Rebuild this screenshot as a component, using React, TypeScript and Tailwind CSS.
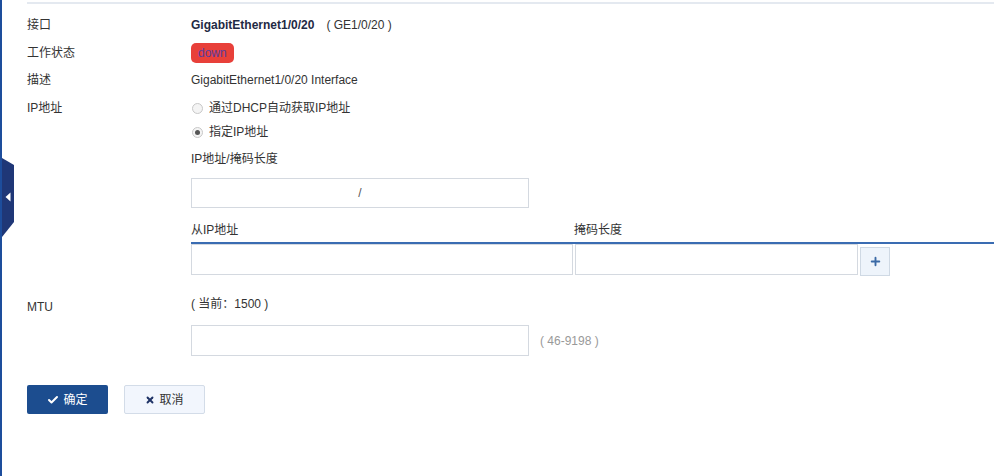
import { Check, Plus, X } from "lucide-react";

function Label({ children }: { children: React.ReactNode }) {
   return <div className="w-[164px] shrink-0 text-[12px] text-[#333]">{children}</div>;
}

function Radio({ checked, label }: { checked?: boolean; label: string }) {
   return (
      <div className="flex items-center h-[22px]">
         <span className="w-[11px] h-[11px] rounded-full border border-[#c8c8c8] bg-[#f4f4f4] flex items-center justify-center ml-[1px] mr-[6px]">
            {checked && <span className="w-[5px] h-[5px] rounded-full bg-[#555]" />}
         </span>
         <span>{label}</span>
      </div>
   );
}

function SidebarTab() {
   return (
      <div className="absolute left-0 top-[158px] w-[12px] h-[79px]">
         <svg width="12" height="79" viewBox="0 0 12 79">
            <polygon points="0,0 12,7 12,64 0,79" fill="#1f3777" />
            <polygon points="3.5,39 8.5,34.5 8.5,43.5" fill="#ffffff" />
         </svg>
      </div>
   );
}

export default function App() {
   return (
      <div
         className="relative w-[994px] h-[476px] bg-white border-l-2 border-[#1d4d9c] overflow-hidden text-[12px] text-[#333]"
         style={{ fontFamily: '"Liberation Sans", "Noto Sans CJK SC", sans-serif' }}
      >
         <SidebarTab />
         <div className="pl-[25px] pt-[2px]">
            <div className="h-[2px] bg-[#e4e9f0]" />

            <div className="flex items-center h-[22px] mt-[10px]">
               <Label>接口</Label>
               <div className="flex items-center">
                  <span className="font-bold text-[#1f2a44]">GigabitEthernet1/0/20</span>
                  <span className="ml-[12px]">( GE1/0/20 )</span>
               </div>
            </div>

            <div className="flex items-center h-[22px] mt-[6px]">
               <Label>工作状态</Label>
               <span className="h-[20px] px-[7px] rounded-[5px] bg-[#e8403a] text-[#5a3d9e] flex items-center">
                  down
               </span>
            </div>

            <div className="flex items-center h-[22px] mt-[5px]">
               <Label>描述</Label>
               <span>GigabitEthernet1/0/20 Interface</span>
            </div>

            <div className="flex mt-[6px]">
               <div className="w-[164px] shrink-0 h-[22px] flex items-center">IP地址</div>
               <div className="flex-1">
                  <Radio label="通过DHCP自动获取IP地址" />
                  <div className="mt-[2px]">
                     <Radio checked label="指定IP地址" />
                  </div>
                  <div className="h-[22px] flex items-center mt-[5px]">IP地址/掩码长度</div>
                  <div className="mt-[8px] w-[338px] h-[30px] border border-[#d4d9e0] flex items-center justify-center">
                     <span className="text-[#555]">/</span>
                  </div>
                  <div className="flex h-[22px] items-center mt-[11px]">
                     <span className="w-[383px]">从IP地址</span>
                     <span>掩码长度</span>
                  </div>
                  <div className="h-[2px] bg-[#3a6cb2] mt-[1px]" />
                  <div className="flex">
                     <div className="w-[382px] h-[31px] border border-[#d4d9e0]" />
                     <div className="w-[283px] h-[31px] border border-[#d4d9e0] ml-[2px]" />
                     <button className="w-[30px] h-[29px] mt-[3px] ml-[2px] border border-[#cfd9e4] bg-[#eef4fb] flex items-center justify-center">
                        <Plus size={13} strokeWidth={3.5} className="text-[#3b6aa6]" />
                     </button>
                  </div>
               </div>
            </div>

            <div className="flex mt-[17px]">
               <div className="w-[164px] shrink-0 h-[22px] flex items-center mt-[3px]">MTU</div>
               <div className="flex-1">
                  <div className="h-[22px] flex items-center">( 当前：1500 )</div>
                  <div className="flex items-center mt-[10px]">
                     <div className="w-[338px] h-[31px] border border-[#d4d9e0]" />
                     <span className="ml-[11px] text-[#999]">( 46-9198 )</span>
                  </div>
               </div>
            </div>

            <div className="flex gap-[16px] mt-[29px]">
               <button className="w-[81px] h-[29px] bg-[#1c4d8f] rounded-[2px] text-white flex items-center justify-center gap-[4px]">
                  <Check size={12} strokeWidth={4} />
                  <span>确定</span>
               </button>
               <button className="w-[81px] h-[29px] bg-[#f2f6fd] border border-[#d3dce8] rounded-[2px] text-[#333] flex items-center justify-center gap-[4px]">
                  <X size={10} strokeWidth={4.5} className="text-[#1f3366]" />
                  <span>取消</span>
               </button>
            </div>
         </div>
      </div>
   );
}
